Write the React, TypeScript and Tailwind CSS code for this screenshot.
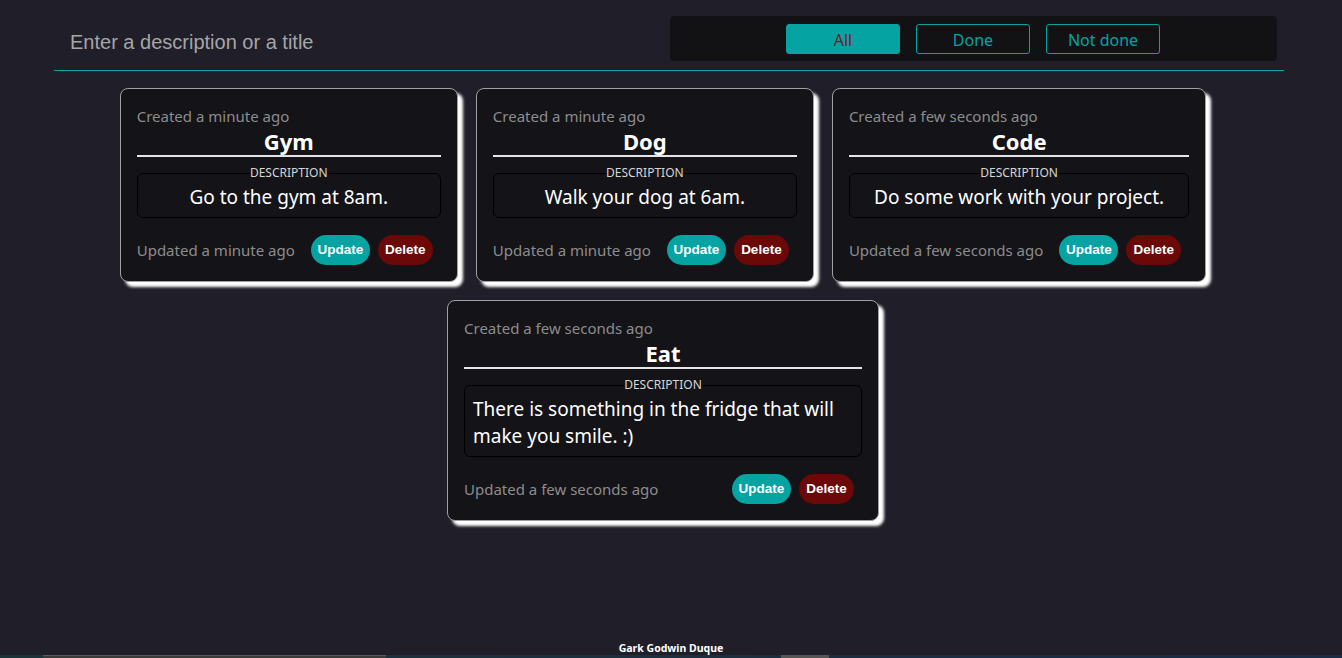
import { useState } from 'react';

interface Todo {
  id: number;
  title: string;
  description: string;
  created: string;
  updated: string;
}

const TODOS: Todo[] = [
  { id: 1, title: 'Gym', description: 'Go to the gym at 8am.', created: 'a minute ago', updated: 'a minute ago' },
  { id: 2, title: 'Dog', description: 'Walk your dog at 6am.', created: 'a minute ago', updated: 'a minute ago' },
  { id: 3, title: 'Code', description: 'Do some work with your project.', created: 'a few seconds ago', updated: 'a few seconds ago' },
  { id: 4, title: 'Eat', description: 'There is something in the fridge that will make you smile. :)', created: 'a few seconds ago', updated: 'a few seconds ago' },
];

const FILTERS = ['All', 'Done', 'Not done'];

export default function App() {
  const [filter, setFilter] = useState('All');
  const [query, setQuery] = useState('');

  return (
    <div className="h-[658px] flex flex-col bg-[#201f29] font-['Noto_Sans',sans-serif] overflow-hidden">
      <header className="ml-[54px] w-[1230px] flex border-b border-[#0aa4a4] pt-4 pb-[9px]">
        <input
          value={query}
          onChange={(e) => setQuery(e.target.value)}
          placeholder="Enter a description or a title"
          className="flex-1 bg-transparent pl-4 pt-[6px] outline-none font-['Liberation_Sans',Arial,sans-serif] text-[20px] text-white placeholder:text-[#a6a6a6]"
        />
        <div className="w-[607px] mr-[7px] h-[45px] rounded bg-[#121214] flex items-start justify-center gap-4 pt-2 pr-px">
          {FILTERS.map((f) => (
            <button
              key={f}
              onClick={() => setFilter(f)}
              className={'w-[114px] h-[30px] rounded-[3px] border border-[#06a3a3] text-[16px] leading-none pt-px ' + (filter === f ? 'bg-[#06a3a3] text-[#7d1428]' : 'text-[#06a3a3]')}
            >
              {f}
            </button>
          ))}
        </div>
      </header>

      <main className="flex-1 flex flex-wrap justify-center content-start gap-[18px] pt-[17px] pr-[16px]">
        {TODOS.map((t) => (
          <TodoCard key={t.id} todo={t} />
        ))}
      </main>

      <footer className="text-center text-white font-bold text-[10.5px] leading-[14px]">Gark Godwin Duque</footer>
      <div className="h-[3px] flex bg-gradient-to-r from-[#1c3437] to-[#1b2a45]">
        <div className="ml-[43px] w-[343px] bg-[#3b3b3b] border-t border-[#5a5a5a]" />
        <div className="ml-[395px] w-[48px] bg-[#555]" />
      </div>
    </div>
  );
}

function TodoCard({ todo }: { todo: Todo }) {
  return (
    <div className="max-w-[432px] rounded-lg border border-[#a0a0a0] bg-[#141318] px-4 pt-[15px] pb-4 shadow-[5px_5px_3px_#ffffff]">
      <div className="text-[15px] leading-6 text-[#8c8c8c]">Created {todo.created}</div>
      <div className="text-center text-[22px] leading-[27px] font-bold text-white border-b-2 border-[#e5e5e5]">{todo.title}</div>
      <fieldset className="mt-2 border border-black rounded-md flex justify-center pb-[6px]">
        <legend className="mx-auto text-[12px] leading-4 text-[#d6d6d6] uppercase">Description</legend>
        <p className="px-2 pt-[3px] text-[19px] leading-[27px] text-white">{todo.description}</p>
      </fieldset>
      <div className="mt-[17px] flex items-center justify-between">
        <span className="text-[15px] leading-6 text-[#8c8c8c] whitespace-nowrap">Updated {todo.updated}</span>
        <div className="flex gap-2 ml-4 mr-2 font-['Liberation_Sans',Arial,sans-serif] text-[13.5px] font-bold text-white">
          <button className="h-[30px] w-[59px] rounded-full bg-[#06a3a3]">Update</button>
          <button className="h-[30px] w-[55px] rounded-full bg-[#6b0808]">Delete</button>
        </div>
      </div>
    </div>
  );
}
